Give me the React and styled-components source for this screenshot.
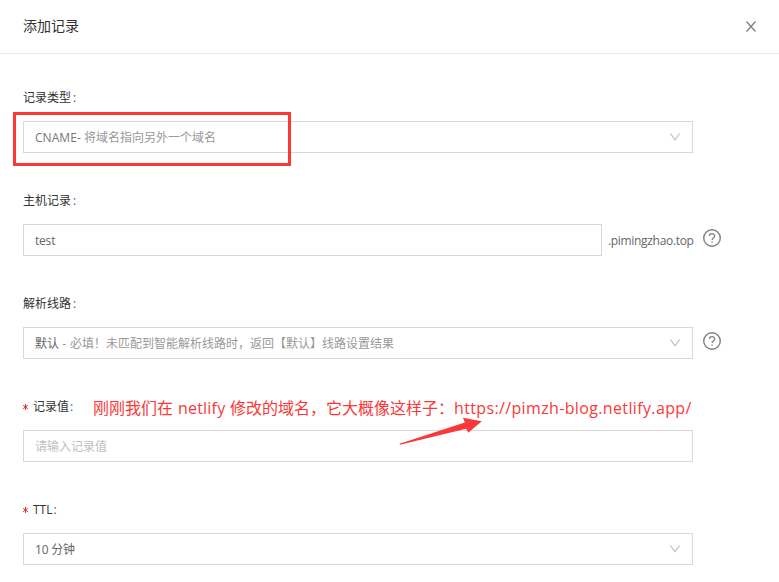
import React from "react";
import styled, { createGlobalStyle } from "styled-components";

const GlobalStyle = createGlobalStyle`
  * { box-sizing: border-box; }
  body {
    margin: 0;
    background: #fff;
    overflow: hidden;
    font-family: "Open Sans", "Noto Sans CJK SC", sans-serif;
    font-size: 12px;
    color: #333;
  }
`;

const Panel = styled.div`
  width: 779px;
  height: 582px;
  overflow: hidden;
`;

const Header = styled.header`
  display: flex;
  align-items: center;
  justify-content: space-between;
  height: 54px;
  padding: 0 23px;
  border-bottom: 1px solid #e8e8e8;
`;

const Title = styled.h1`
  margin: 0;
  padding-bottom: 2px;
  font-size: 14px;
  line-height: 20px;
  font-weight: 400;
  color: #333;
`;

const CloseButton = styled.button`
  display: flex;
  padding: 0;
  border: 0;
  background: none;
`;

const Form = styled.form`
  padding: 33px 0 0 23px;
`;

const Field = styled.div`
  height: 103px;
`;

const Label = styled.label`
  display: flex;
  align-items: center;
  height: 20px;
  margin-bottom: 14px;
  color: #333;
  white-space: pre;
`;

const Required = styled.span`
  display: flex;
  width: 10px;
  padding-top: 2px;
`;

const Colon = styled.span`
  padding-left: ${(p) => p.$gap}px;
  color: #555;
`;

const Row = styled.div`
  position: relative;
  display: flex;
  align-items: center;
`;

const Control = styled.div`
  display: flex;
  align-items: center;
  width: ${(p) => p.$width || 670}px;
  height: 32px;
  padding: ${(p) => p.$top || 0}px 11px 0;
  border: 1px solid #d9d9d9;
  color: ${(p) => p.$color || "#666"};
  white-space: pre;

  svg { margin: -1px 1px 0 auto; }
`;

const Run = styled.span`
  flex: none;
  width: ${(p) => (p.$width ? `${p.$width}px` : "auto")};
  letter-spacing: ${(p) => p.$spacing || 0}px;
  color: ${(p) => p.$color || "inherit"};
`;

const Suffix = styled.span`
  width: 86px;
  padding: 1px 0 0 6px;
  margin-right: 5px;
  color: #666;
  white-space: nowrap;
`;

const HelpSlot = styled.span`
  display: flex;
  margin: -4px 0 0 ${(p) => p.$gap}px;
`;

const Highlight = styled.div`
  position: absolute;
  left: -10px;
  top: -9px;
  width: 278px;
  height: 54px;
  border: 3px solid #fb3838;
`;

const Note = styled.div`
  position: absolute;
  left: 70px;
  top: -34px;
  display: flex;
  font-size: 16px;
  line-height: 24px;
  color: #fb3838;
  white-space: pre;
`;

const ArrowMark = styled.svg`
  position: absolute;
  left: 376px;
  top: -14px;
`;

const CloseIcon = () => (
  <svg width="10" height="11" viewBox="0 0 10 11" fill="none" stroke="#808080" strokeWidth="1.3">
    <path d="M.5 .5 9.5 10.5M9.5 .5 .5 10.5" />
  </svg>
);

const Chevron = () => (
  <svg width="10" height="8" viewBox="0 0 10 8" fill="none" stroke="#bfbfbf" strokeWidth="1.2">
    <path d="M.4 .5 5 6.8 9.6 .5" />
  </svg>
);

const Asterisk = () => (
  <svg width="5" height="6" viewBox="0 0 5 6" fill="none" stroke="#d0342c" strokeWidth="1">
    <path d="M2.5 0V6M.2 1.3 4.8 4.7M4.8 1.3 .2 4.7" />
  </svg>
);

const HelpIcon = () => (
  <svg width="18" height="18" viewBox="0 0 18 18" fill="none" stroke="#808080">
    <circle cx="9" cy="9" r="8.3" strokeWidth="1.4" />
    <path d="M6.4 7.1C6.4 3.8 11.7 3.8 11.7 7C11.7 8.9 9.1 8.7 9.1 11.1" strokeWidth="1.3" />
    <path d="M8.4 13.1H9.8" strokeWidth="1.4" />
  </svg>
);

const FieldLabel = ({ text, required, spacing, gap = 2 }) => (
  <Label>
    {required && <Required><Asterisk /></Required>}
    <Run $spacing={spacing}>{text}</Run>
    <Colon $gap={gap}>:</Colon>
  </Label>
);

export default function App() {
  return (
    <>
      <GlobalStyle />
      <Panel>
        <Header>
          <Title>添加记录</Title>
          <CloseButton type="button" aria-label="关闭"><CloseIcon /></CloseButton>
        </Header>
        <Form>
          <Field>
            <FieldLabel text="记录类型" />
            <Row>
              <Control>
                <Run $width={49} $spacing={0.05} $color="#777">CNAME-</Run>
                <Run $color="#999">将域名指向另外一个域名</Run>
                <Chevron />
              </Control>
              <Highlight />
            </Row>
          </Field>
          <Field>
            <FieldLabel text="主机记录" />
            <Row>
              <Control $width={579} $top={1}><Run $spacing={-0.2}>test</Run></Control>
              <Suffix><Run $spacing={-0.32}>.pimingzhao.top</Run></Suffix>
              <HelpSlot $gap={10}><HelpIcon /></HelpSlot>
            </Row>
          </Field>
          <Field>
            <FieldLabel text="解析线路" />
            <Row>
              <Control>
                <Run $width={35}>默认 <Run $color="#999">-</Run></Run>
                <Run $color="#999">必填！未匹配到智能解析线路时，返回【默认】线路设置结果</Run>
                <Chevron />
              </Control>
              <HelpSlot $gap={10}><HelpIcon /></HelpSlot>
            </Row>
          </Field>
          <Field>
            <FieldLabel text="记录值" required gap={1} />
            <Row>
              <Control $color="#bfbfbf"><Run>请输入记录值</Run></Control>
              <Note>
                <Run $width={85}>刚刚我们在</Run>
                <Run $width={52} $spacing={0.2}>netlify</Run>
                <Run $width={224}>修改的域名，它大概像这样子：</Run>
                <Run $spacing={0.36}>https://pimzh-blog.netlify.app/</Run>
              </Note>
              <ArrowMark width="84" height="30" viewBox="0 0 84 30">
                <path d="M.6 27.8 65.8 6.4 64 1.8 82.8 5.2 69.2 16.7 67.2 12.8 1 28.8Z" fill="#fb3838" />
              </ArrowMark>
            </Row>
          </Field>
          <Field>
            <FieldLabel text="TTL" required gap={1} />
            <Row>
              <Control><Run $spacing={-0.2}>10 分钟</Run><Chevron /></Control>
            </Row>
          </Field>
        </Form>
      </Panel>
    </>
  );
}
